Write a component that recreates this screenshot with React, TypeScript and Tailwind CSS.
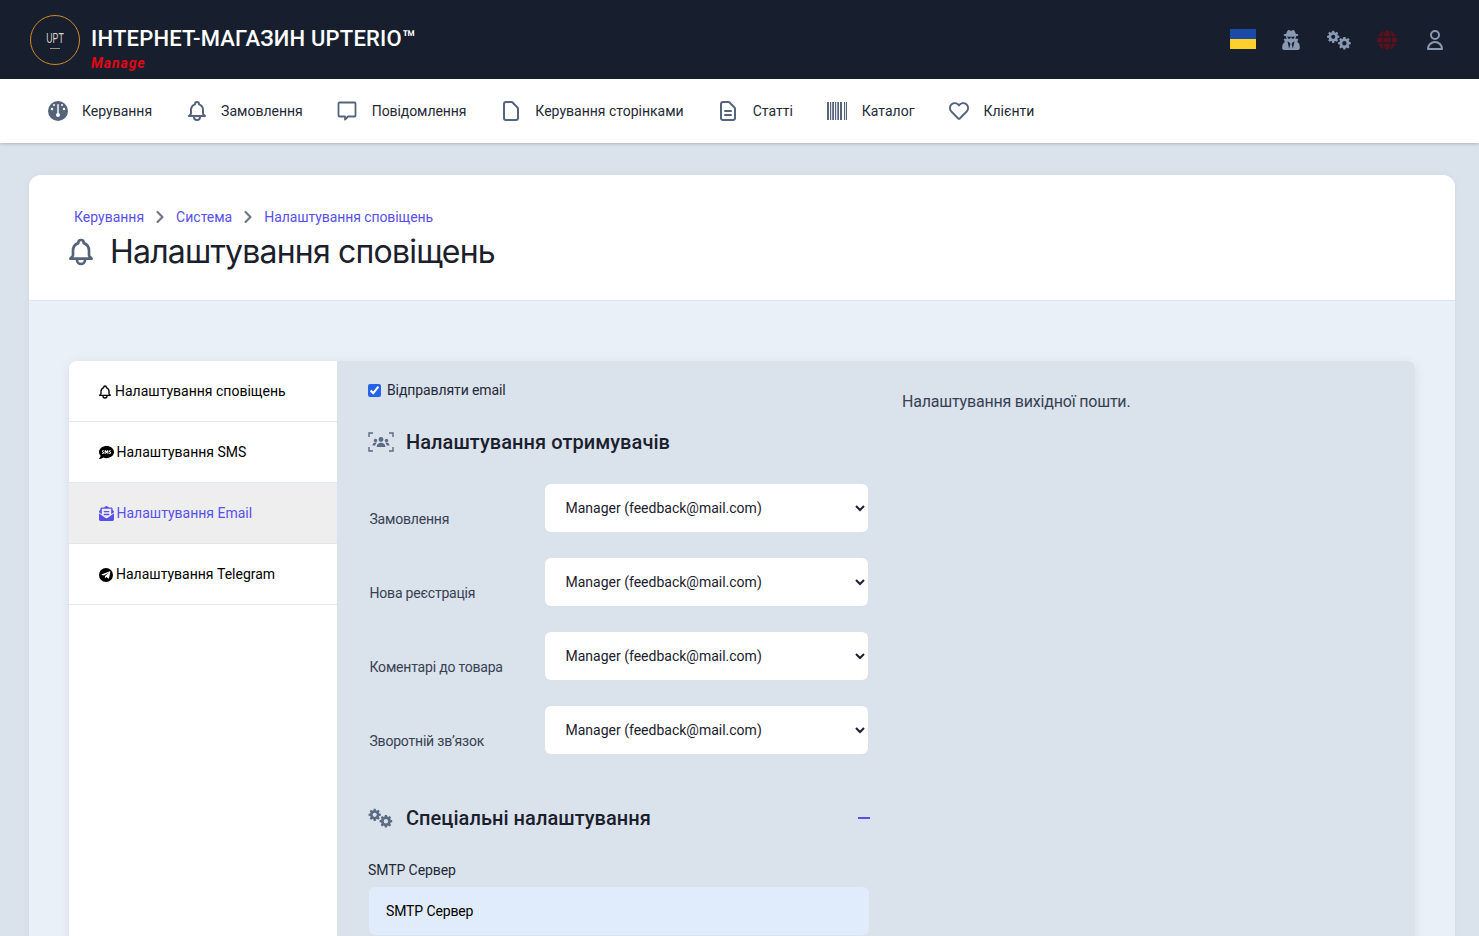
import { FaGlobe, FaRegHeart, FaSms, FaTelegramPlane, FaEnvelopeOpenText, FaUserSecret } from 'react-icons/fa';
import { HiOutlineBell, HiOutlineUser, HiOutlineDocument, HiOutlineDocumentText } from 'react-icons/hi';
import { ChevronRight } from 'lucide-react';
import type { ReactNode } from 'react';

const navItems: { label: string; icon: ReactNode; tight?: boolean }[] = [
  { label: 'Керування', icon: <GaugeIcon /> },
  { label: 'Замовлення', icon: <HiOutlineBell className="h-[24px] w-[24px] shrink-0" /> },
  { label: 'Повідомлення', icon: <ChatIcon />, tight: true },
  { label: 'Керування сторінками', icon: <HiOutlineDocument className="h-[24px] w-[24px] shrink-0" /> },
  { label: 'Статті', icon: <HiOutlineDocumentText className="h-[24px] w-[24px] shrink-0" /> },
  { label: 'Каталог', icon: <BarcodeIcon /> },
  { label: 'Клієнти', icon: <FaRegHeart className="h-[20px] w-[20px]" /> },
];

const recipients = ['Замовлення', 'Нова реєстрація', 'Коментарі до товара', 'Зворотній зв’язок'];

function gearPath(cx: number, cy: number, outer: number, inner: number, hole: number) {
  const teeth = 8;
  let d = '';
  for (let i = 0; i < teeth; i++) {
    const a = (i / teeth) * Math.PI * 2;
    const step = (Math.PI * 2) / teeth;
    const pts = [
      [inner, a - step * 0.36],
      [outer, a - step * 0.2],
      [outer, a + step * 0.2],
      [inner, a + step * 0.36],
    ];
    for (const [r, t] of pts) {
      d += `${d === '' ? 'M' : 'L'}${(cx + r * Math.cos(t)).toFixed(2)} ${(cy + r * Math.sin(t)).toFixed(2)}`;
    }
  }
  d += `Z M${cx - hole} ${cy}a${hole} ${hole} 0 1 0 ${hole * 2} 0a${hole} ${hole} 0 1 0 ${-hole * 2} 0Z`;
  return d;
}

function GearsIcon({ className }: { className: string }) {
  return (
    <svg viewBox="0 0 24 20" fill="currentColor" fillRule="evenodd" className={className}>
      <path d={gearPath(6.2, 6.8, 6.2, 4.700, 2.100)} />
      <path d={gearPath(17.4, 13.2, 6.4, 4.900, 2.200)} />
    </svg>
  );
}

function GaugeIcon() {
  return (
    <svg viewBox="0 0 20 20" className="h-[20px] w-[20px]">
      <circle cx="10" cy="10" r="10" fill="currentColor" />
      <g fill="#fff">
        <circle cx="4" cy="8" r="1.200" />
        <circle cx="16" cy="8" r="1.200" />
        <circle cx="6" cy="4" r="1" />
        <circle cx="14" cy="4" r="1" />
        <rect x="9.300" y="3" width="1.400" height="10" rx="0.700" />
        <circle cx="10" cy="14" r="2" />
      </g>
    </svg>
  );
}

function BarcodeIcon() {
  return (
    <svg viewBox="0 0 20 18" fill="currentColor" className="h-[18px] w-[20px] shrink-0">
      <rect x="0" y="0" width="2" height="18" />
      <rect x="3" y="0" width="1.200" height="18" />
      <rect x="5.200" y="0" width="1.800" height="18" />
      <rect x="8" y="0" width="1.200" height="18" />
      <rect x="10.300" y="0" width="1.700" height="18" />
      <rect x="13" y="0" width="2" height="18" />
      <rect x="17" y="0" width="1" height="18" />
      <rect x="18.800" y="0" width="1.200" height="18" />
    </svg>
  );
}

function ChatIcon() {
  return (
    <svg viewBox="0 0 20 20" fill="none" stroke="currentColor" strokeWidth="1.8" strokeLinejoin="round" className="h-[20px] w-[20px]">
      <path d="M2.500 1.500h15a1 1 0 0 1 1 1v12a1 1 0 0 1-1 1h-6.500l-3 3v-3h-5.500a1 1 0 0 1-1-1v-12a1 1 0 0 1 1-1z" />
    </svg>
  );
}

function GroupScanIcon() {
  return (
    <svg viewBox="0 0 26 20" className="h-[20px] w-[26px] text-[#5b6b82]" fill="none" stroke="currentColor" strokeWidth="1.400">
      <path d="M1 5V1h4M21 1h4v4M1 15v4h4M21 19h4v-4" />
      <g fill="currentColor" stroke="none">
        <circle cx="13" cy="7.500" r="2.400" />
        <circle cx="7.500" cy="8.500" r="1.700" />
        <circle cx="18.500" cy="8.500" r="1.700" />
        <path d="M8.700 15c0-3 2-4.200 4.300-4.200s4.300 1.200 4.300 4.200z" />
        <path d="M4.500 13.500c0-2 1.300-3 3-3 .5 0 .9.100 1.300.3-.9.700-1.400 1.600-1.500 2.700z" />
        <path d="M21.500 13.500c0-2-1.300-3-3-3-.5 0-.9.100-1.300.3.900.7 1.400 1.600 1.500 2.700z" />
      </g>
    </svg>
  );
}

function Logo() {
  return (
    <div className="flex h-[50px] w-[50px] shrink-0 flex-col items-center justify-center rounded-full border-[1.5px] border-[#d08a22]">
      <span className="scale-x-[0.58] text-[15px] leading-[15px] text-[#d8d4c8] font-['Liberation_Sans',sans-serif]">UPT</span>
      <span className="mt-[3px] h-px w-[10px] bg-[#9a927f]" />
    </div>
  );
}

function SideItem({ icon, label, active }: { icon: ReactNode; label: string; active?: boolean }) {
  return (
    <div className={`flex h-[61px] items-center gap-[3px] border-b border-[#dfe6f0] pt-[1px] pl-[30px] text-[14px] ${active ? 'bg-[#eeeeee] text-[#5850ec]' : 'text-black'}`}>
      {icon}
      <span>{label}</span>
    </div>
  );
}

export default function App() {
  return (
    <div className="flex h-screen flex-col overflow-hidden bg-[#dae2ec] font-['Roboto',sans-serif] text-[#1a202c]">
      <header className="flex h-[79px] shrink-0 items-center justify-between bg-[#171f2e] pr-[32px] pl-[30px]">
        <div className="flex items-center gap-[11px]">
          <Logo />
          <div className="pt-[18px]">
            <div className="text-[22px] leading-[30px] font-medium tracking-[0.2px] text-white">ІНТЕРНЕТ-МАГАЗИН UPTERIO™</div>
            <div className="-mt-[1px] text-[14px] leading-[20px] font-bold tracking-[0.9px] text-[#e30613] italic">Manage</div>
          </div>
        </div>
        <div className="flex items-center gap-[24px] text-[#8a9ab2]">
          <div className="mr-[-1px] mb-[2px] flex h-[20px] w-[26px] flex-col">
            <div className="h-[10px] bg-[#1b4aa8]" />
            <div className="h-[10px] bg-[#fdd02b]" />
          </div>
          <FaUserSecret className="h-[20px] w-[24px]" />
          <GearsIcon className="h-[20px] w-[24px]" />
          <FaGlobe className="h-[20px] w-[24px] text-[#5c0f1c]" />
          <HiOutlineUser className="h-[24px] w-[24px]" />
        </div>
      </header>

      <nav className="relative flex h-[64px] shrink-0 items-center gap-[34px] bg-white pl-[47px] text-[14px] text-[#1f2937] shadow-[0_1px_3px_rgba(0,0,0,0.2)]">
        {navItems.map((item) => (
          <div key={item.label} className="flex items-center gap-[14px]">
            <span className="flex h-[24px] w-[21px] items-center justify-center text-[#55647a]">{item.icon}</span>
            <span className={item.tight ? 'tracking-[-0.08px]' : ''}>{item.label}</span>
          </div>
        ))}
      </nav>

      <main className="mt-[32px] mr-[24px] ml-[29px] flex-1 rounded-t-xl bg-[#eaf0f8] shadow-[0_0_8px_rgba(0,0,0,0.04)]">
        <div className="h-[126px] rounded-t-xl border-b border-[#dce4ee] bg-white pt-[32px] pl-[40px]">
          <div className="flex items-center pl-[5px] text-[14px] leading-[20px] text-[#5850ec]">
            <span>Керування</span>
            <ChevronRight strokeWidth={2.5} className="mx-[6px] h-[20px] w-[20px] text-[#6b7280]" />
            <span>Система</span>
            <ChevronRight strokeWidth={2.5} className="mx-[6px] h-[20px] w-[20px] text-[#6b7280]" />
            <span className="tracking-[-0.08px]">Налаштування сповіщень</span>
          </div>
          <div className="mt-[1px] -ml-[4px] flex items-center gap-[13px]">
            <HiOutlineBell className="h-[32px] w-[32px] text-[#55647a]" />
            <h1 className="text-[32px] leading-[48px] font-normal tracking-[-0.8px] text-[#1a202c] font-['Inter',sans-serif]">Налаштування сповіщень</h1>
          </div>
        </div>

        <div className="mx-[40px] mt-[60px] flex h-[600px] overflow-hidden rounded-t-lg shadow-[0_2px_12px_rgba(0,0,0,0.08)]">
          <aside className="w-[268px] shrink-0 bg-white">
            <SideItem icon={<HiOutlineBell className="-mr-[1px] -ml-[2px] h-[16px] w-[16px]" />} label="Налаштування сповіщень" />
            <SideItem icon={<FaSms className="-mr-[0.5px] h-[15px] w-[15px]" />} label="Налаштування SMS" />
            <SideItem active icon={<FaEnvelopeOpenText className="-mr-[0.5px] h-[15px] w-[15px]" />} label="Налаштування Email" />
            <SideItem
              icon={
                <span className="flex h-[14px] w-[14px] items-center justify-center rounded-full bg-black text-white">
                  <FaTelegramPlane className="h-[10px] w-[10px]" />
                </span>
              }
              label="Налаштування Telegram"
            />
          </aside>

          <section className="flex flex-1 bg-[#dae2ec] pl-[31px]">
            <div className="w-[502px] shrink-0">
              <label className="mt-[19px] flex h-[20px] items-center gap-[6px] pt-[1px] text-[14px] tracking-[-0.1px] text-[#1f2937]">
                <input type="checkbox" defaultChecked className="m-0 h-[13px] w-[13px] accent-[#2563eb]" />
                Відправляти email
              </label>
              <div className="mt-[28px] flex h-[28px] items-center gap-[12px]">
                <GroupScanIcon />
                <h2 className="text-[20px] leading-[28px] font-medium tracking-[0.06px] text-[#1a202c]">Налаштування отримувачів</h2>
              </div>
              <div className="mt-[28px] flex flex-col gap-[26px]">
                {recipients.map((r) => (
                  <div key={r} className="flex h-[48px] items-end">
                    <span className="w-[177px] shrink-0 pb-[3px] pl-[1.500px] text-[14px] leading-[20px] tracking-[-0.2px] text-[#374151]">{r}</span>
                    <select className="h-[48px] w-[323px] rounded-md bg-white pr-[1px] pl-[16.500px] text-[14px] text-[#1a202c] outline-none">
                      <option>Manager (feedback@mail.com)</option>
                    </select>
                  </div>
                ))}
              </div>
              <div className="mt-[50px] flex h-[28px] items-center justify-between">
                <div className="flex items-center gap-[13px]">
                  <GearsIcon className="h-[20px] w-[25px] text-[#5b6b82]" />
                  <h2 className="text-[20px] leading-[28px] font-medium tracking-[0.05px] text-[#1a202c]">Спеціальні налаштування</h2>
                </div>
                <span className="h-[2px] w-[12px] bg-[#5850ec]" />
              </div>
              <div className="mt-[28px] text-[14px] leading-[20px] tracking-[-0.08px] text-[#1f2937]">SMTP Сервер</div>
              <input readOnly value="SMTP Сервер" className="mt-[7px] ml-px block h-[48px] w-[500px] rounded-md bg-[#e0ebfb] px-[17px] text-[14px] tracking-[-0.12px] text-black outline-none" />
            </div>
            <p className="pt-[31px] pl-[32px] text-[16px] leading-[20px] tracking-[-0.2px] text-[#374151]">Налаштування вихідної пошти.</p>
          </section>
        </div>
      </main>
    </div>
  );
}
